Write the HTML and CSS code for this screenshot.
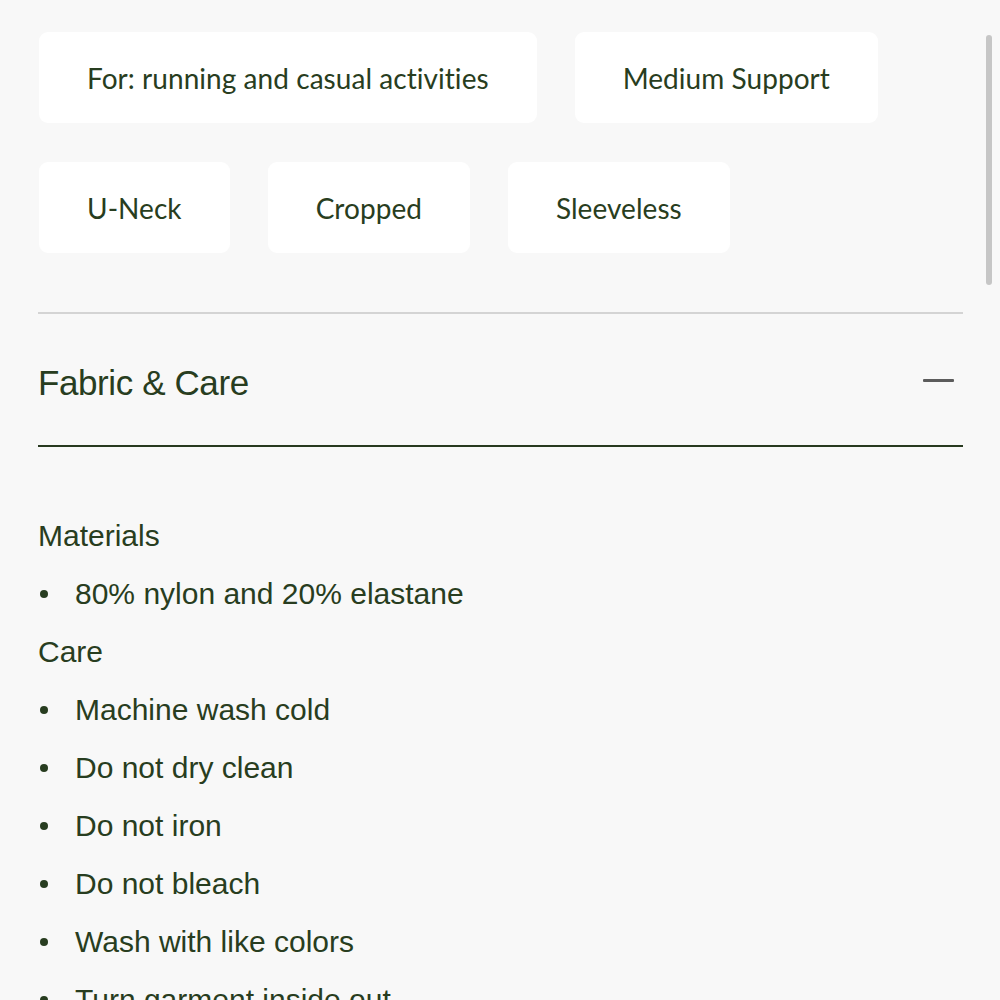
FILE: index.html
```html
<!DOCTYPE html>
<html>
<head>
<meta charset="utf-8">
<link rel="stylesheet" href="styles.css">
</head>
<body>
<div class="page">
  <div class="chips">
    <div class="chip-row">
      <div class="chip">For: running and casual activities</div>
      <div class="chip">Medium Support</div>
    </div>
    <div class="chip-row">
      <div class="chip">U-Neck</div>
      <div class="chip">Cropped</div>
      <div class="chip">Sleeveless</div>
    </div>
  </div>
  <div class="accordion">
    <div class="acc-head">
      <h2 class="acc-title">Fabric &amp; Care</h2>
      <span class="acc-minus"></span>
    </div>
    <div class="acc-body">
      <div class="label">Materials</div>
      <ul class="list">
        <li>80% nylon and 20% elastane</li>
      </ul>
      <div class="label">Care</div>
      <ul class="list">
        <li>Machine wash cold</li>
        <li>Do not dry clean</li>
        <li>Do not iron</li>
        <li>Do not bleach</li>
        <li>Wash with like colors</li>
        <li>Turn garment inside out</li>
      </ul>
    </div>
  </div>
</div>
<div class="scroll-thumb"></div>
</body>
</html>
```
FILE: styles.css
```css
html, body {
  margin: 0;
  padding: 0;
  background: #f8f8f8;
  height: 1000px;
  overflow: hidden;
}
.page {
  padding: 32px 37px 0 38px;
  color: #283d20;
}
.chips {
  display: flex;
  flex-direction: column;
  gap: 39px;
  padding-left: 1px;
}
.chip-row {
  display: flex;
  gap: 38px;
}
.chip {
  background: #ffffff;
  border-radius: 9px;
  height: 91px;
  padding: 0 48px;
  display: flex;
  align-items: center;
  font-family: "Lato", sans-serif;
  font-size: 28px;
  letter-spacing: 0.05px;
  color: #283d20;
  white-space: nowrap;
}
.accordion {
  margin-top: 59px;
  border-top: 2px solid #d4d4d4;
}
.acc-head {
  height: 131px;
  display: flex;
  align-items: center;
  justify-content: space-between;
  border-bottom: 2px solid #27391f;
}
.acc-title {
  margin: 0;
  font-family: "Liberation Sans", Arial, sans-serif;
  font-weight: normal;
  font-size: 35px;
  letter-spacing: -0.4px;
  color: #283d20;
  padding-top: 6px;
}
.acc-minus {
  width: 31px;
  height: 3px;
  background: #5c5c5c;
  border-radius: 1px;
  margin-right: 9px;
  margin-top: 1px;
}
.acc-body {
  padding-top: 60px;
  font-family: "Liberation Sans", Arial, sans-serif;
  font-size: 30px;
  line-height: 58px;
}
.label {
  margin: 0;
}
.list {
  list-style: none;
  margin: 0;
  padding: 0;
}
.list li {
  position: relative;
  padding-left: 37px;
}
.list li::before {
  content: "";
  position: absolute;
  left: 2px;
  top: 25px;
  width: 8px;
  height: 8px;
  border-radius: 50%;
  background: #283d20;
}
.scroll-thumb {
  position: absolute;
  left: 986px;
  top: 35px;
  width: 6px;
  height: 250px;
  border-radius: 3px;
  background: #c6c6c6;
}
```
